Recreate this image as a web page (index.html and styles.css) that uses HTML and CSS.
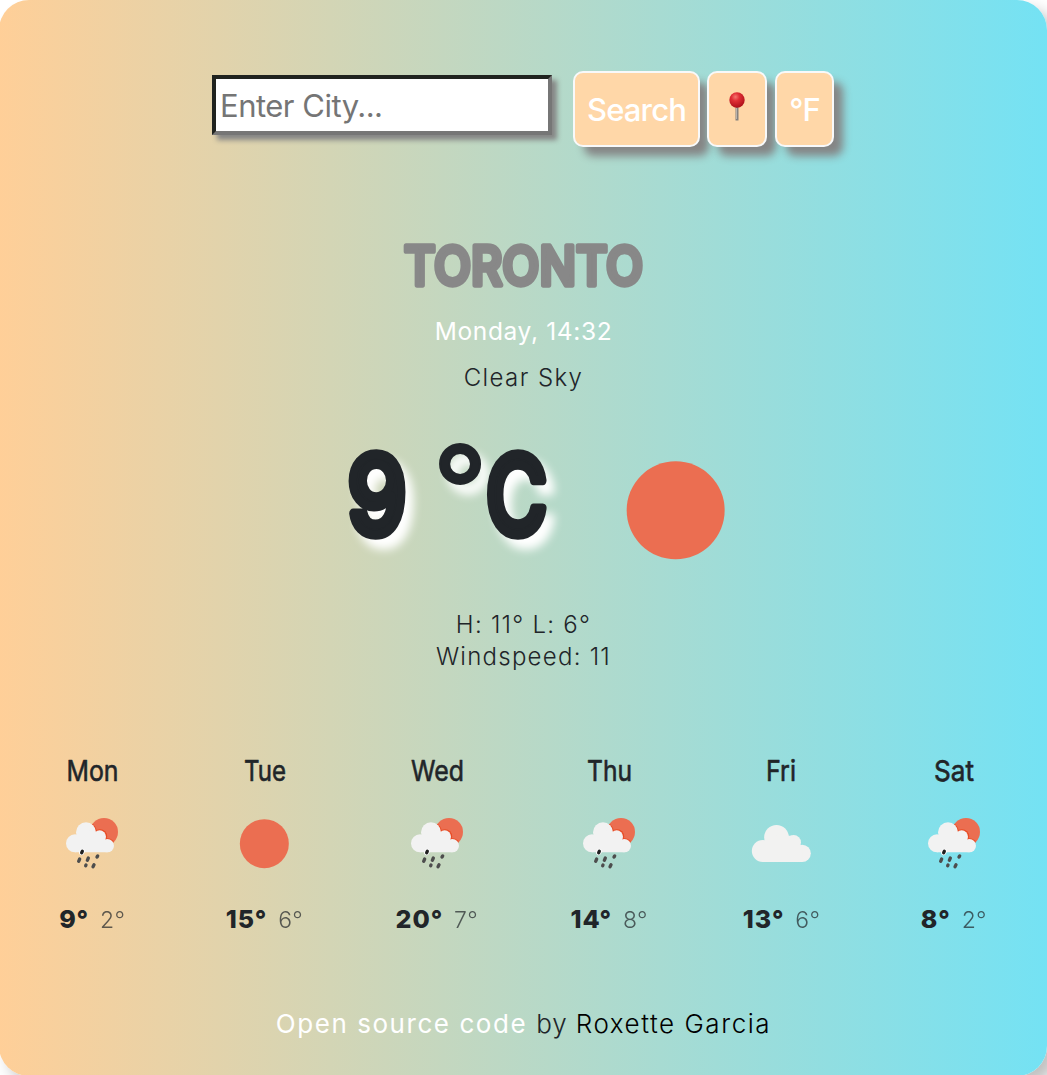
FILE: index.html
```html
<!DOCTYPE html>
<html lang="en">
<head>
<meta charset="utf-8">
<title>Weather</title>
<link rel="stylesheet" href="styles.css">
</head>
<body>
<svg class="sprite" aria-hidden="true">
  <defs>
    <clipPath id="sunClip"><circle cx="126" cy="54" r="42"/></clipPath>
    <radialGradient id="pinHead" cx=".4" cy=".3" r=".75"><stop offset="0" stop-color="#f5766e"/><stop offset=".35" stop-color="#e02f35"/><stop offset="1" stop-color="#a90d17"/></radialGradient>
  </defs>
  <symbol id="sun" viewBox="0 0 180 180"><circle cx="91" cy="89" r="73.5" fill="#eb6e51"/></symbol>
  <symbol id="cloud" viewBox="0 0 180 180">
    <g fill="#f2f2f1"><circle cx="35.5" cy="111" r="33"/><circle cx="76.5" cy="70" r="37"/><circle cx="128" cy="85" r="22"/><circle cx="153.500" cy="118" r="26"/><path d="M35 95 76 65H128L154 100V144H35Z"/></g>
  </symbol>
  <symbol id="rain" viewBox="0 0 180 180">
    <circle cx="126" cy="54" r="42" fill="#eb6e51"/>
    <g fill="#e84c25" clip-path="url(#sunClip)"><circle cx="72" cy="55" r="32.500"/><circle cx="114" cy="67" r="21.500"/><circle cx="136" cy="95" r="22.500"/></g>
    <g fill="#f2f2f2"><circle cx="39" cy="88" r="27"/><circle cx="72" cy="55" r="30"/><circle cx="113" cy="68" r="19"/><circle cx="136" cy="95" r="20"/><path d="M39 75 70 45 113 65 137 90V115H39Z"/></g>
    <path d="M59 116 61 112" stroke="#fff" stroke-width="15" stroke-linecap="round"/>
    <path d="M59 116 61 112" stroke="#202020" stroke-width="10" stroke-linecap="round"/>
    <path d="M50 142 53 135M76 139 79 132M105 129 107 126M71 155 72 153M93 158 96 152" stroke="#4d4d4d" stroke-width="10" stroke-linecap="round"/>
  </symbol>
</svg>
<main class="card">
  <form class="search">
    <input class="city-input" type="text" placeholder="Enter City...">
    <button class="btn btn-search" type="button">Search</button>
    <button class="btn btn-pin" type="button" aria-label="Current location"><svg width="20" height="32" viewBox="0 0 20 32"><path d="M10 14V29.500" stroke="#85817d" stroke-width="3"/><path d="M9.500 17V28" stroke="#b9b3ae"/><circle cx="10" cy="9" r="7.700" fill="url(#pinHead)"/></svg></button>
    <button class="btn btn-unit" type="button">°F</button>
  </form>
  <h1 class="city"><svg width="260" height="60" viewBox="0 0 260 60"><text x="10" y="49.500" textLength="239" lengthAdjust="spacingAndGlyphs">TORONTO</text></svg></h1>
  <p class="date"><span>Monday, 14:32</span></p>
  <p class="sky"><span>Clear Sky</span></p>
  <section class="current">
    <svg class="temperature" width="230" height="130" viewBox="340 430 230 130">
      <g><text transform="translate(347.500 533.500) scale(.86 1)">9</text><text class="degree" transform="translate(432.500 532.500)">°</text><text transform="translate(486 533.500) scale(.765 1)">C</text></g>
    </svg>
    <svg class="current-icon" width="120" height="120"><use href="#sun"/></svg>
  </section>
  <p class="details"><span class="range">H: 11° L: 6°</span><span class="wind">Windspeed: 11</span></p>
  <section class="forecast">
    <article class="day"><h2><svg width="60" height="40"><text x="4.500" y="29" textLength="52" lengthAdjust="spacingAndGlyphs">Mon</text></svg></h2><svg class="icon"><use href="#rain"/></svg><p><b>9°</b><span class="low">2°</span></p></article>
    <article class="day"><h2><svg width="60" height="40"><text x="10" y="29" textLength="42" lengthAdjust="spacingAndGlyphs">Tue</text></svg></h2><svg class="icon"><use href="#sun"/></svg><p><b>15°</b><span class="low">6°</span></p></article>
    <article class="day"><h2><svg width="60" height="40"><text x="4" y="29" textLength="53" lengthAdjust="spacingAndGlyphs">Wed</text></svg></h2><svg class="icon"><use href="#rain"/></svg><p><b>20°</b><span class="low">7°</span></p></article>
    <article class="day"><h2><svg width="60" height="40"><text x="8" y="29" textLength="45" lengthAdjust="spacingAndGlyphs">Thu</text></svg></h2><svg class="icon"><use href="#rain"/></svg><p><b>14°</b><span class="low">8°</span></p></article>
    <article class="day"><h2><svg width="60" height="40"><text x="15" y="29" textLength="30" lengthAdjust="spacingAndGlyphs">Fri</text></svg></h2><svg class="icon"><use href="#cloud"/></svg><p><b>13°</b><span class="low">6°</span></p></article>
    <article class="day"><h2><svg width="60" height="40"><text x="10" y="29" textLength="40" lengthAdjust="spacingAndGlyphs">Sat</text></svg></h2><svg class="icon"><use href="#rain"/></svg><p><b>8°</b><span class="low">2°</span></p></article>
  </section>
  <footer class="credit"><a class="source">Open source code</a><span class="by">by</span><a class="author">Roxette Garcia</a></footer>
</main>
</body>
</html>
```
FILE: styles.css
```css
* { box-sizing: border-box; }
body { margin: 0; background: #fff; color: #212529; font-family: Inter, "Liberation Sans", sans-serif; overflow: hidden; }
h1, h2, p { margin: 0; font-weight: 400; }
svg { display: block; overflow: visible; }
.sprite { position: absolute; width: 0; height: 0; }
.card { display: flex; flex-direction: column; width: 1048px; height: 1076px; margin-left: -1px; padding-left: 1px; border-radius: 30px; background: linear-gradient(90deg, #ffcf98, #74e2f4); box-shadow: 10px 10px 16px #c0c0c0; }
.search { display: flex; align-items: center; height: 76px; margin: 71px 0 0 212px; }
.city-input { width: 340px; height: 60px; margin: 0 21px 8px 0; padding: 1px 4px; border: 4px solid; border-color: #20231f #767676 #767676 #20231f; background: #fff; color: #212529; font: 31px Inter, sans-serif; letter-spacing: -.5px; box-shadow: 5px 5px 5px #858585; outline: 0; }
.city-input::placeholder { color: #757575; opacity: 1; }
.btn { display: flex; align-items: center; justify-content: center; height: 76px; padding: 0; border: 2px solid #f8f9fa; border-radius: 10px; background: #ffd7a8; color: #fff; font: 500 31px Inter, sans-serif; letter-spacing: -.85px; box-shadow: 10px 10px 8px -1px #858585; }
.btn-search { width: 127px; margin-right: 7px; }
.btn-pin { width: 60px; margin-right: 8px; padding: 0 0 5px; }
.btn-unit { width: 59px; }
.city { display: flex; justify-content: center; height: 60px; margin-top: 88px; }
.city text { font: 500 53.500px Inter, sans-serif; fill: #888; stroke: #888; stroke-width: 5.400; stroke-linejoin: round; }
.date, .sky { display: flex; justify-content: center; height: 32px; line-height: 32px; }
.date { margin-top: 20px; color: #fff; font-size: 24.500px; font-weight: 400; letter-spacing: .65px; }
.sky { margin-top: 15px; font-size: 24px; font-weight: 300; letter-spacing: 1.400px; }
.current { display: flex; height: 130px; margin: 36px 0 0 340px; }
.temperature { filter: drop-shadow(8px 10px 5px #fff); }
.temperature text { font: 500 109px Inter, sans-serif; fill: #212529; stroke: #212529; stroke-width: 9.500; stroke-linejoin: round; }
.temperature .degree { font-size: 121px; font-weight: 400; stroke-width: 2.200; }
.current-icon { margin: 20.500px 0 0 44.500px; }
.details { display: flex; flex-direction: column; align-items: center; height: 64px; margin-top: 49px; font-size: 24px; font-weight: 300; line-height: 32px; letter-spacing: 1.250px; }
.forecast { display: grid; grid-template-columns: repeat(6, 1fr); height: 190px; margin: 79px 7px 0 6px; }
.day { display: flex; flex-direction: column; align-items: center; }
.day h2 { height: 62px; }
.day text { font: 400 29px Inter, sans-serif; fill: #212529; stroke: #212529; stroke-width: .6; stroke-linejoin: round; }
.icon { width: 60px; height: 60px; }
.day p { display: flex; align-items: baseline; gap: 11px; margin-top: 29px; line-height: 32px; }
.day b { font-size: 25px; font-weight: 800; letter-spacing: .9px; }
.low { font-size: 23px; font-weight: 300; letter-spacing: .3px; opacity: .7; }
.credit { display: flex; justify-content: center; margin-top: 66px; font-size: 26px; line-height: 32px; letter-spacing: 1.550px; }
.source { color: #fff; font-weight: 400; }
.by { margin: 0 8px 0 9px; font-weight: 300; letter-spacing: 1px; }
.author { color: #000; font-weight: 300; }
```
